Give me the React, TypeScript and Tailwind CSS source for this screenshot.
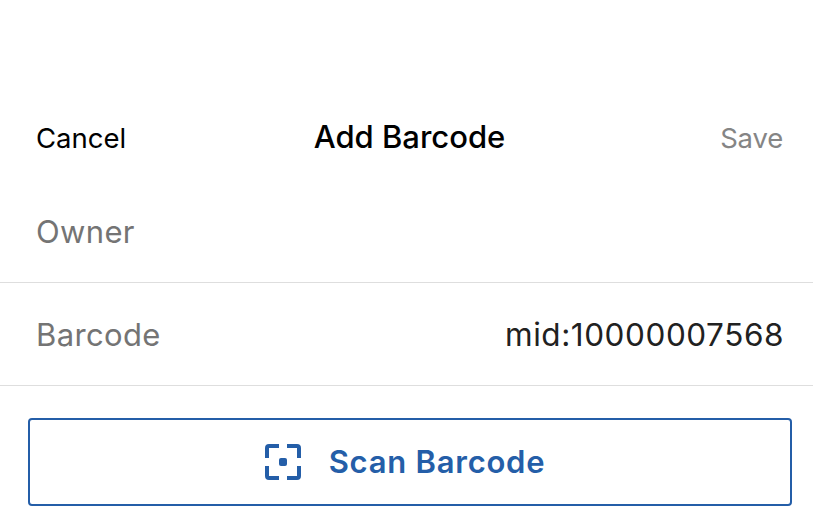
import type { ReactNode } from "react";

function ScanIcon() {
  return (
    <svg className="h-9 w-9 shrink-0" viewBox="0 0 36 36" fill="none">
      <path
        d="M2 14V4a2 2 0 0 1 2-2h10M22 2h10a2 2 0 0 1 2 2v10M34 22v10a2 2 0 0 1-2 2H22M14 34H4a2 2 0 0 1-2-2V22"
        stroke="currentColor"
        strokeWidth="4"
      />
      <rect x="14" y="14" width="8" height="8" rx="2" fill="currentColor" />
    </svg>
  );
}

function Row({ label, children }: { label: string; children?: ReactNode }) {
  return (
    <div className="flex h-[103px] items-center justify-between border-b border-[#dedede] pt-[3px] pr-[29px] pl-9 text-[31px]">
      <span className="tracking-[0.35px] text-[#747474]">{label}</span>
      {children}
    </div>
  );
}

export default function App() {
  return (
    <div className="h-[522px] w-full overflow-hidden bg-white font-['Inter',sans-serif] whitespace-nowrap">
      <header className="grid h-[180px] grid-cols-[1fr_auto_1fr] items-center pt-[95px] pr-[30px] pl-9 text-[27.5px]">
        <button className="pt-0.5 text-left text-black">Cancel</button>
        <h1 className="text-[31px] font-medium text-black">Add Barcode</h1>
        <button className="pt-0.5 text-right tracking-[-0.2px] text-[#858585]">Save</button>
      </header>

      <Row label="Owner" />
      <Row label="Barcode">
        <span className="pb-0.5 text-[31.5px] tracking-[0.55px] text-[#212121]">mid:10000007568</span>
      </Row>

      <div className="pt-8 pr-[21px] pl-7">
        <button className="flex h-[88px] w-full items-center justify-center gap-7 rounded-[4px] border-2 border-[#245ea8] pr-2.5 text-[31px] font-semibold tracking-[0.75px] text-[#245ea8]">
          <ScanIcon />
          Scan Barcode
        </button>
      </div>
    </div>
  );
}
